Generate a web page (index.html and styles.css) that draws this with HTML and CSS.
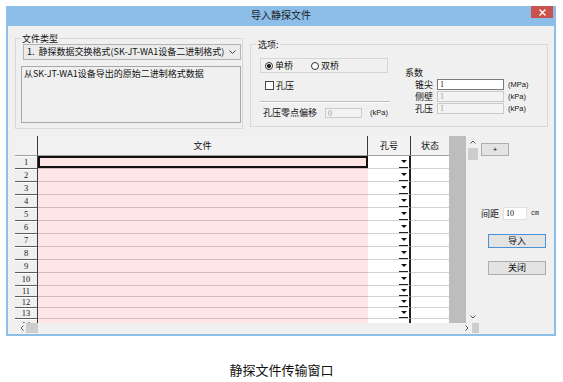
FILE: index.html
```html
<!DOCTYPE html>
<html lang="zh">
<head>
<meta charset="utf-8">
<link rel="stylesheet" href="styles.css">
</head>
<body>
<div class="page">
  <div class="window">
    <div class="titlebar">
      <span></span>
      <span class="title">导入静探文件</span>
      <span class="close"><svg width="7" height="7" viewBox="0 0 7 7"><path d="M0.5 0.5L6.5 6.5M6.5 0.5L0.5 6.5" stroke="#fff" stroke-width="1.3"/></svg></span>
    </div>
    <div class="client">
      <div class="top">
        <div class="group g1">
          <div class="legend">文件类型</div>
          <div class="select"><span>1.&nbsp;&nbsp;静探数据交换格式(SK-JT-WA1设备二进制格式)</span><svg width="7" height="4" viewBox="0 0 7 4"><path d="M0.5 0.5L3.5 3.5L6.5 0.5" fill="none" stroke="#444" stroke-width="1"/></svg></div>
          <div class="textarea">从SK-JT-WA1设备导出的原始二进制格式数据</div>
        </div>
        <div class="group g2">
          <div class="legend">选项:</div>
          <div class="g2-body">
            <div class="opt-left">
              <div class="radio-box">
                <span class="radio on"></span><span class="rtext">单桥</span>
                <span class="radio second"></span><span class="rtext">双桥</span>
              </div>
              <div class="check-row"><span class="checkbox"></span><span class="rtext">孔压</span></div>
              <div class="sep"></div>
              <div class="offset-row"><span class="olbl">孔压零点偏移</span><span class="input dis small">0</span><span class="unit">(kPa)</span></div>
            </div>
            <div class="opt-right">
              <div class="coef-title">系数</div>
              <div class="coef-row"><span class="lbl">锥尖</span><span class="input wide">1</span><span class="unit">(MPa)</span></div>
              <div class="coef-row"><span class="lbl">侧壁</span><span class="input wide dis">1</span><span class="unit">(kPa)</span></div>
              <div class="coef-row"><span class="lbl">孔压</span><span class="input wide dis">1</span><span class="unit">(kPa)</span></div>
            </div>
          </div>
        </div>
      </div>
      <div class="bottom">
        <div class="gridwrap">
          <div class="gw-main">
            <div class="table">
              <div class="row head"><div class="hc corner"></div><div class="hc sepr">文件</div><div class="hc sepr">孔号</div><div class="hc">状态</div></div>
              <div class="row"><div class="rh">1</div><div class="cf cur"></div><div class="ck"><i class="dd"></i></div><div class="cs"></div></div>
              <div class="row"><div class="rh">2</div><div class="cf"></div><div class="ck"><i class="dd"></i></div><div class="cs"></div></div>
              <div class="row"><div class="rh">3</div><div class="cf"></div><div class="ck"><i class="dd"></i></div><div class="cs"></div></div>
              <div class="row"><div class="rh">4</div><div class="cf"></div><div class="ck"><i class="dd"></i></div><div class="cs"></div></div>
              <div class="row"><div class="rh">5</div><div class="cf"></div><div class="ck"><i class="dd"></i></div><div class="cs"></div></div>
              <div class="row"><div class="rh">6</div><div class="cf"></div><div class="ck"><i class="dd"></i></div><div class="cs"></div></div>
              <div class="row"><div class="rh">7</div><div class="cf"></div><div class="ck"><i class="dd"></i></div><div class="cs"></div></div>
              <div class="row"><div class="rh">8</div><div class="cf"></div><div class="ck"><i class="dd"></i></div><div class="cs"></div></div>
              <div class="row"><div class="rh">9</div><div class="cf"></div><div class="ck"><i class="dd"></i></div><div class="cs"></div></div>
              <div class="row"><div class="rh">10</div><div class="cf"></div><div class="ck"><i class="dd"></i></div><div class="cs"></div></div>
              <div class="row short"><div class="rh">11</div><div class="cf"></div><div class="ck"><i class="dd"></i></div><div class="cs"></div></div>
              <div class="row short"><div class="rh">12</div><div class="cf"></div><div class="ck"><i class="dd"></i></div><div class="cs"></div></div>
              <div class="row short"><div class="rh">13</div><div class="cf"></div><div class="ck"><i class="dd"></i></div><div class="cs"></div></div>
              <div class="row"><div class="rh">14</div><div class="cf"></div><div class="ck"><i class="dd"></i></div><div class="cs"></div></div>
            </div>
            <div class="vscroll">
              <svg class="chev-up" width="6" height="4" viewBox="0 0 6 4"><path d="M0.5 3.5L3 1L5.5 3.5" fill="none" stroke="#555" stroke-width="1"/></svg>
              <div class="vthumb"></div>
              <div class="fill"></div>
              <svg class="chev-down" width="6" height="4" viewBox="0 0 6 4"><path d="M0.5 0.5L3 3L5.5 0.5" fill="none" stroke="#555" stroke-width="1"/></svg>
            </div>
          </div>
          <div class="gw-foot">
            <div class="hscroll">
              <svg class="chev-left" width="4" height="6" viewBox="0 0 4 6"><path d="M3.5 0.5L1 3L3.5 5.5" fill="none" stroke="#555" stroke-width="1"/></svg>
              <div class="hthumb"></div>
              <div class="fill"></div>
              <svg class="chev-right" width="4" height="6" viewBox="0 0 4 6"><path d="M0.5 0.5L3 3L0.5 5.5" fill="none" stroke="#555" stroke-width="1"/></svg>
            </div>
            <div class="corner-box"></div>
          </div>
        </div>
        <div class="panel">
          <div class="btn plus">+</div>
          <div class="spacing-row"><span class="slbl">间距</span><span class="input sp">10</span><span class="cm">cm</span></div>
          <div class="btn act primary">导入</div>
          <div class="btn act second">关闭</div>
        </div>
      </div>
    </div>
  </div>
  <div class="caption">静探文件传输窗口</div>
</div>
</body>
</html>
```

FILE: styles.css
```css
body {
  margin: 0;
  background: #fff;
  font-family: "Noto Sans CJK SC", sans-serif;
  font-size: 9px;
  color: #111;
}

.page {
  padding-top: 6px;
}

.window {
  margin-left: 6px;
  width: 550px;
  height: 330px;
  box-sizing: border-box;
  background: #8cbee9;
  padding: 0 2px 2px 2px;
  display: flex;
  flex-direction: column;
}

.titlebar {
  height: 20px;
  display: grid;
  grid-template-columns: 1fr auto 1fr;
  align-items: start;
}

.title {
  font-size: 10px;
  line-height: 18px;
  color: #1c1c1c;
}

.close {
  justify-self: end;
  margin-right: 1px;
  width: 22px;
  height: 12px;
  background: #c9524d;
  display: flex;
  align-items: center;
  justify-content: center;
}

.client {
  flex: 1;
  background: #f0f0f0;
  display: flex;
  flex-direction: column;
}

.top {
  height: 110px;
  display: flex;
  align-items: flex-start;
}

.group {
  box-sizing: border-box;
  border: 1px solid #d9d9d9;
  display: flex;
  flex-direction: column;
}

.legend {
  align-self: flex-start;
  margin-top: -6px;
  height: 11px;
  line-height: 11px;
  padding: 0 1px;
  background: #f0f0f0;
}

.g1 {
  margin: 12px 0 0 7px;
  width: 228px;
  height: 91px;
}

.g1 .legend {
  margin-left: 5px;
}

.select {
  margin-left: 7px;
  width: 218px;
  height: 16px;
  box-sizing: border-box;
  border: 1px solid #b4b4b4;
  background: #ebebeb;
  display: flex;
  align-items: center;
  justify-content: space-between;
  padding: 0 4px 0 3px;
  line-height: 12px;
}

.textarea {
  margin: 6px 0 0 5px;
  width: 220px;
  height: 57px;
  box-sizing: border-box;
  border: 1px solid #a8a8a8;
  background: #f0f0f0;
  padding: 1px 2px;
  line-height: 12px;
}

.g2 {
  margin: 18px 0 0 7px;
  width: 298px;
  height: 83px;
}

.g2 .legend {
  margin-left: 6px;
}

.g2-body {
  display: flex;
}

.opt-left {
  margin-left: 9px;
  width: 130px;
  display: flex;
  flex-direction: column;
}

.radio-box {
  margin-top: 8px;
  width: 128px;
  height: 15px;
  box-sizing: border-box;
  border: 1px solid #d6d6d6;
  display: flex;
  align-items: center;
  padding-left: 4px;
}

.radio {
  width: 8px;
  height: 8px;
  box-sizing: border-box;
  border: 1px solid #333;
  border-radius: 50%;
  background: #fff;
}

.radio.on {
  background: radial-gradient(circle, #222 0 1.8px, #fff 2.3px);
}

.radio.second {
  margin-left: 18px;
}

.rtext {
  margin-left: 2px;
  line-height: 11px;
}

.check-row {
  margin-top: 7px;
  height: 11px;
  display: flex;
  align-items: center;
  padding-left: 5px;
}

.checkbox {
  width: 9px;
  height: 9px;
  box-sizing: border-box;
  border: 1px solid #444;
  background: #fff;
}

.sep {
  margin-top: 10px;
  width: 130px;
  height: 1px;
  background: #bcbcbc;
  border-bottom: 1px solid #fff;
}

.offset-row {
  margin-top: 4px;
  height: 11px;
  display: flex;
  align-items: center;
  padding-left: 3px;
}

.olbl {
  width: 54px;
  line-height: 11px;
}

.input {
  box-sizing: border-box;
  height: 11px;
  border: 1px solid #7a7a7a;
  background: #fff;
  font-family: "Liberation Serif", serif;
  font-size: 8px;
  line-height: 9px;
  padding-left: 2px;
  color: #111;
}

.input.dis {
  border-color: #cacaca;
  background: #f3f3f3;
  color: #9a9a9a;
}

.input.small {
  margin-left: 8px;
  width: 37px;
  height: 10px;
}

.unit {
  margin-left: 8px;
  font-family: "Liberation Sans", sans-serif;
  font-size: 7.5px;
  line-height: 9px;
}

.opt-right {
  margin-left: 15px;
  display: flex;
  flex-direction: column;
}

.coef-title {
  margin-top: 17px;
  height: 11px;
  line-height: 11px;
}

.coef-row {
  margin-top: 1px;
  height: 11px;
  display: flex;
  align-items: center;
  padding-left: 10px;
}

.lbl {
  width: 18px;
  line-height: 11px;
}

.input.wide {
  margin-left: 4px;
  width: 67px;
}

.coef-row .unit {
  margin-left: 4px;
}

.bottom {
  display: flex;
  height: 198px;
}

.gridwrap {
  margin-left: 7px;
  width: 464px;
  height: 197px;
  display: flex;
  flex-direction: column;
}

.gw-main {
  display: flex;
  height: 187px;
}

.table {
  width: 451px;
  height: 187px;
  overflow: hidden;
  background: #bdbdbd;
}

.row {
  display: grid;
  grid-template-columns: 23px 330px 43px 38px;
  width: 434px;
  height: 13px;
}

.row.short {
  height: 11px;
}

.row.head {
  height: 20px;
}

.hc {
  box-sizing: border-box;
  background: #f2f2f2;
  border-bottom: 1px solid #a0a0a0;
  text-align: center;
  line-height: 19px;
}

.hc.corner,
.hc.sepr {
  border-right: 1px solid #3a3a3a;
}

.rh {
  box-sizing: border-box;
  background: #efefef;
  border-bottom: 1px solid #5c5c5c;
  border-right: 1px solid #3a3a3a;
  box-shadow: inset 0 1px 0 #fff;
  text-align: center;
  font-family: "Liberation Serif", serif;
  font-size: 8.5px;
  line-height: 12px;
  color: #222;
}

.short .rh {
  line-height: 10px;
}

.cf {
  box-sizing: border-box;
  background: #ffe6e6;
  border-bottom: 1px solid #cdbdbd;
}

.cf.cur {
  box-shadow: inset 0 0 0 2px #111;
}

.ck {
  box-sizing: border-box;
  background: #fff;
  border-bottom: 1px solid #d2d2d2;
  border-right: 2px solid #222;
  display: flex;
  justify-content: flex-end;
}

.dd {
  width: 9px;
  margin-right: 1px;
  box-sizing: border-box;
  border-bottom: 1px solid #222;
  display: flex;
  align-items: center;
  justify-content: center;
}

.dd::before {
  content: "";
  border-left: 3px solid transparent;
  border-right: 3px solid transparent;
  border-top: 3px solid #111;
}

.cs {
  box-sizing: border-box;
  background: #fff;
  border-bottom: 1px solid #d2d2d2;
}

.vscroll {
  width: 13px;
  background: #f0f0f0;
  display: flex;
  flex-direction: column;
  align-items: center;
}

.chev-up {
  margin-top: 4px;
}

.vthumb {
  margin-top: 4px;
  width: 10px;
  height: 12px;
  background: #cdcdcd;
}

.fill {
  flex: 1;
}

.chev-down {
  margin-bottom: 4px;
}

.gw-foot {
  display: flex;
  height: 10px;
}

.hscroll {
  width: 457px;
  background: #f0f0f0;
  display: flex;
  align-items: center;
}

.chev-left {
  margin-left: 5px;
}

.hthumb {
  margin-left: 2px;
  width: 12px;
  height: 10px;
  background: #cdcdcd;
}

.chev-right {
  margin-right: 3px;
}

.corner-box {
  width: 7px;
  background: #cdcdcd;
}

.panel {
  margin-left: 2px;
  display: flex;
  flex-direction: column;
}

.btn {
  box-sizing: border-box;
  border: 1px solid #adadad;
  background: #e3e3e3;
  text-align: center;
}

.btn.plus {
  margin-top: 7px;
  width: 28px;
  height: 13px;
  font-family: "Liberation Sans", sans-serif;
  font-size: 8px;
  line-height: 11px;
}

.spacing-row {
  margin-top: 51px;
  height: 13px;
  display: flex;
  align-items: center;
}

.slbl {
  width: 18px;
  line-height: 11px;
}

.input.sp {
  margin-left: 4px;
  width: 24px;
  height: 13px;
  line-height: 11px;
  border-color: #e0e0e0;
}

.cm {
  margin-left: 4px;
  font-family: "Liberation Mono", monospace;
  font-size: 6.5px;
}

.btn.act {
  margin-left: 7px;
  width: 58px;
  height: 14px;
  line-height: 12px;
}

.btn.primary {
  margin-top: 14px;
  border-color: #4a90d9;
}

.btn.second {
  margin-top: 13px;
}

.caption {
  margin-top: 26px;
  text-align: center;
  font-size: 13px;
  line-height: 16px;
  color: #111;
}
```
